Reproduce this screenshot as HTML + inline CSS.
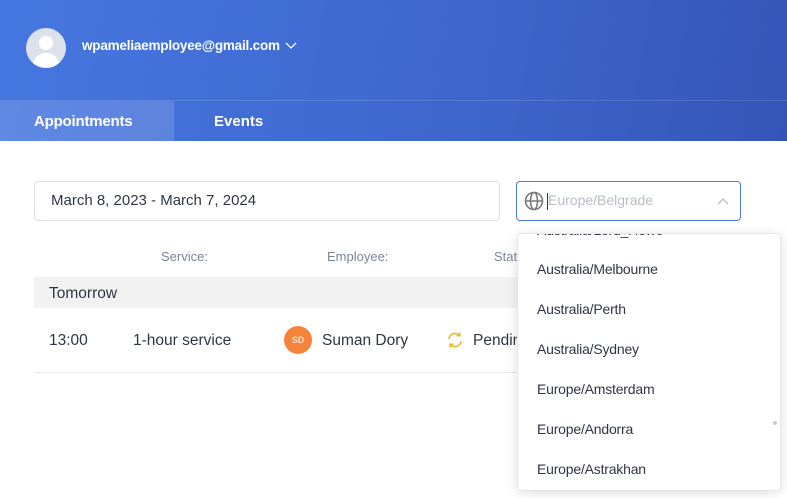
<!DOCTYPE html>
<html><head><style>
*{margin:0;padding:0;box-sizing:border-box}
body{width:787px;height:498px;overflow:hidden;background:#fff;font-family:"Liberation Sans",sans-serif;position:relative}
.hdr{position:absolute;left:0;top:0;width:787px;height:141px;background:linear-gradient(100deg,#4677e0 0%,#3d66cc 60%,#3455b8 100%)}
.av{position:absolute;left:26px;top:28px;width:40px;height:40px;border-radius:50%;background:#dce2ec;overflow:hidden}
.email{position:absolute;left:82px;top:38px;color:#fff;font-weight:bold;font-size:13.5px;letter-spacing:-0.2px}
.tabs{position:absolute;left:0;top:100px;width:787px;height:41px;border-top:1px solid rgba(255,255,255,.15)}
.tab1{position:absolute;left:0;top:0;width:174px;height:41px;background:rgba(255,255,255,.14);color:#fff;font-weight:bold;font-size:15px;padding:12px 0 0 34px;letter-spacing:-0.2px}
.tab2{position:absolute;left:214px;top:12px;color:#fff;font-weight:bold;font-size:15px}
.inp{position:absolute;border:1px solid #dcdfe6;border-radius:4px;height:40px;top:181px}
.t{position:absolute;font-size:15px;color:#2e3646}
.th{position:absolute;top:249px;font-size:13px;color:#7c8596}
.dd{position:absolute;left:517px;top:233px;width:264px;height:258px;background:#fff;border:1px solid #e4e7ed;border-radius:4px;box-shadow:0 2px 12px rgba(0,0,0,.12);overflow:hidden}
.it{position:absolute;left:19px;font-size:14px;color:#303545;letter-spacing:-0.2px}
</style></head><body>
<div class="hdr">
<div class="av"><svg width="40" height="40"><circle cx="20" cy="15" r="7" fill="#fff"/><path d="M6 40 Q8 25 20 25 Q32 25 34 40Z" fill="#fff"/></svg></div>
<div class="email">wpameliaemployee@gmail.com <svg width="12" height="8" style="margin-left:2px"><path d="M1 1l5 5 5-5" stroke="#fff" fill="none" stroke-width="1.3"/></svg></div>
<div class="tabs"><div class="tab1">Appointments</div><div class="tab2">Events</div></div>
</div>
<div class="inp" style="left:34px;width:466px"><span class="t" style="left:16px;top:10px">March 8, 2023 - March 7, 2024</span></div>
<div class="inp" style="left:516px;width:225px;border-color:#4a7ae0">
<svg style="position:absolute;left:7px;top:9px" width="20" height="20" viewBox="0 0 20 20"><g fill="none" stroke="#7a7a7a" stroke-width="1.6"><circle cx="10" cy="10" r="8.5"/><ellipse cx="10" cy="10" rx="3.5" ry="8.5"/><path d="M1.5 10h17"/></g></svg>
<div style="position:absolute;left:30px;top:11px;width:1px;height:17px;background:#333"></div>
<span class="t" style="left:31px;top:10px;color:#b8bcc5;font-size:14px">Europe/Belgrade</span>
<svg style="position:absolute;left:200px;top:15px" width="12" height="8"><path d="M1 7l5-5 5 5" stroke="#b8bcc5" fill="none" stroke-width="1.3"/></svg>
</div>
<div class="th" style="left:161px">Service:</div>
<div class="th" style="left:327px">Employee:</div>
<div class="th" style="left:494px">Status:</div>
<div style="position:absolute;left:34px;top:277px;width:500px;height:31px;background:#f2f2f2"></div>
<span class="t" style="left:49px;top:285px;font-size:15.5px">Tomorrow</span>
<span class="t" style="left:49px;top:332px;font-size:15.5px">13:00</span>
<span class="t" style="left:133px;top:332px;font-size:15.5px">1-hour service</span>
<div style="position:absolute;left:284px;top:326px;width:28px;height:28px;border-radius:50%;background:#f5843a;color:#fde2cf;font-size:9px;font-weight:bold;text-align:center;line-height:28px">SD</div>
<span class="t" style="left:322px;top:332px;font-size:15.5px">Suman Dory</span>
<svg style="position:absolute;left:446px;top:331px" width="18" height="18" viewBox="0 0 18 18"><g fill="none" stroke="#e8b92a" stroke-width="1.6"><path d="M3 8a6 6 0 0 1 10.5-3.5"/><path d="M15 10a6 6 0 0 1-10.5 3.5"/><path d="M13.8 1.5v3.2h-3.2"/><path d="M4.2 16.5v-3.2h3.2"/></g></svg>
<span class="t" style="left:473px;top:332px;font-size:15.5px">Pending</span>
<div style="position:absolute;left:34px;top:372px;width:500px;height:1px;background:#e4e7ed"></div>
<div class="dd">
<div class="it" style="top:-12px">Australia/Lord_Howe</div>
<div class="it" style="top:27px">Australia/Melbourne</div>
<div class="it" style="top:67px">Australia/Perth</div>
<div class="it" style="top:107px">Australia/Sydney</div>
<div class="it" style="top:147px">Europe/Amsterdam</div>
<div class="it" style="top:187px">Europe/Andorra</div>
<div class="it" style="top:227px">Europe/Astrakhan</div>
<div style="position:absolute;left:255px;top:187px;width:4px;height:4px;border-radius:2px;background:#ccc"></div>
</div>
</body></html>
